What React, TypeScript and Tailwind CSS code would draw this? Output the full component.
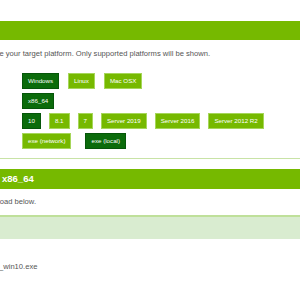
import type { ReactNode } from "react";

function Btn({ children, active }: { children: ReactNode; active?: boolean }) {
  return (
    <span
      className={
        "h-[16px] px-[5px] flex items-center border text-white text-[6.2px] leading-none whitespace-nowrap " +
        (active ? "bg-[#0b6b0b] border-[#06560a]" : "bg-[#76b900] border-[#a6d65a]")
      }
    >
      {children}
    </span>
  );
}

export default function App() {
  return (
    <div className="w-[300px] h-[286px] overflow-hidden bg-white text-[#555] font-['Liberation_Sans',sans-serif]">
      <div className="pt-[21px]">
        <div className="h-[19px] bg-[#76b900]" />

        <p className="mt-[9px] -ml-[25px] text-[7.6px] leading-[10px] whitespace-nowrap">
          describe your target platform. Only supported platforms will be shown.
        </p>

        <div className="pl-[22px] pt-[14px] flex flex-col gap-[4px]">
          <div className="flex gap-[9px]">
            <Btn active>Windows</Btn>
            <Btn>Linux</Btn>
            <Btn>Mac OSX</Btn>
          </div>
          <div className="flex gap-[9px]">
            <Btn active>x86_64</Btn>
          </div>
          <div className="flex gap-[8px]">
            <Btn active>10</Btn>
            <Btn>8.1</Btn>
            <Btn>7</Btn>
            <Btn>Server 2019</Btn>
            <Btn>Server 2016</Btn>
            <Btn>Server 2012 R2</Btn>
          </div>
          <div className="flex gap-[14px]">
            <Btn>exe (network)</Btn>
            <Btn active>exe (local)</Btn>
          </div>
        </div>

        <div className="mt-[9px] h-[1px] bg-[#c8e3a6]" />

        <div className="mt-[10px] h-[20px] bg-[#76b900] flex items-center pl-[2px] text-white font-bold text-[9.5px] whitespace-nowrap">
          x86_64
        </div>

        <p className="mt-[8px] -ml-[2px] text-[7.6px] leading-[10px] whitespace-nowrap">
          load below.
        </p>

        <div className="mt-[8px] h-[24px] bg-[#d9ecd0] border-t-2 border-[#bfe09a]" />

        <p className="mt-[23px] -ml-[1px] text-[7.6px] leading-[10px] whitespace-nowrap">
          _win10.exe
        </p>
      </div>
    </div>
  );
}
